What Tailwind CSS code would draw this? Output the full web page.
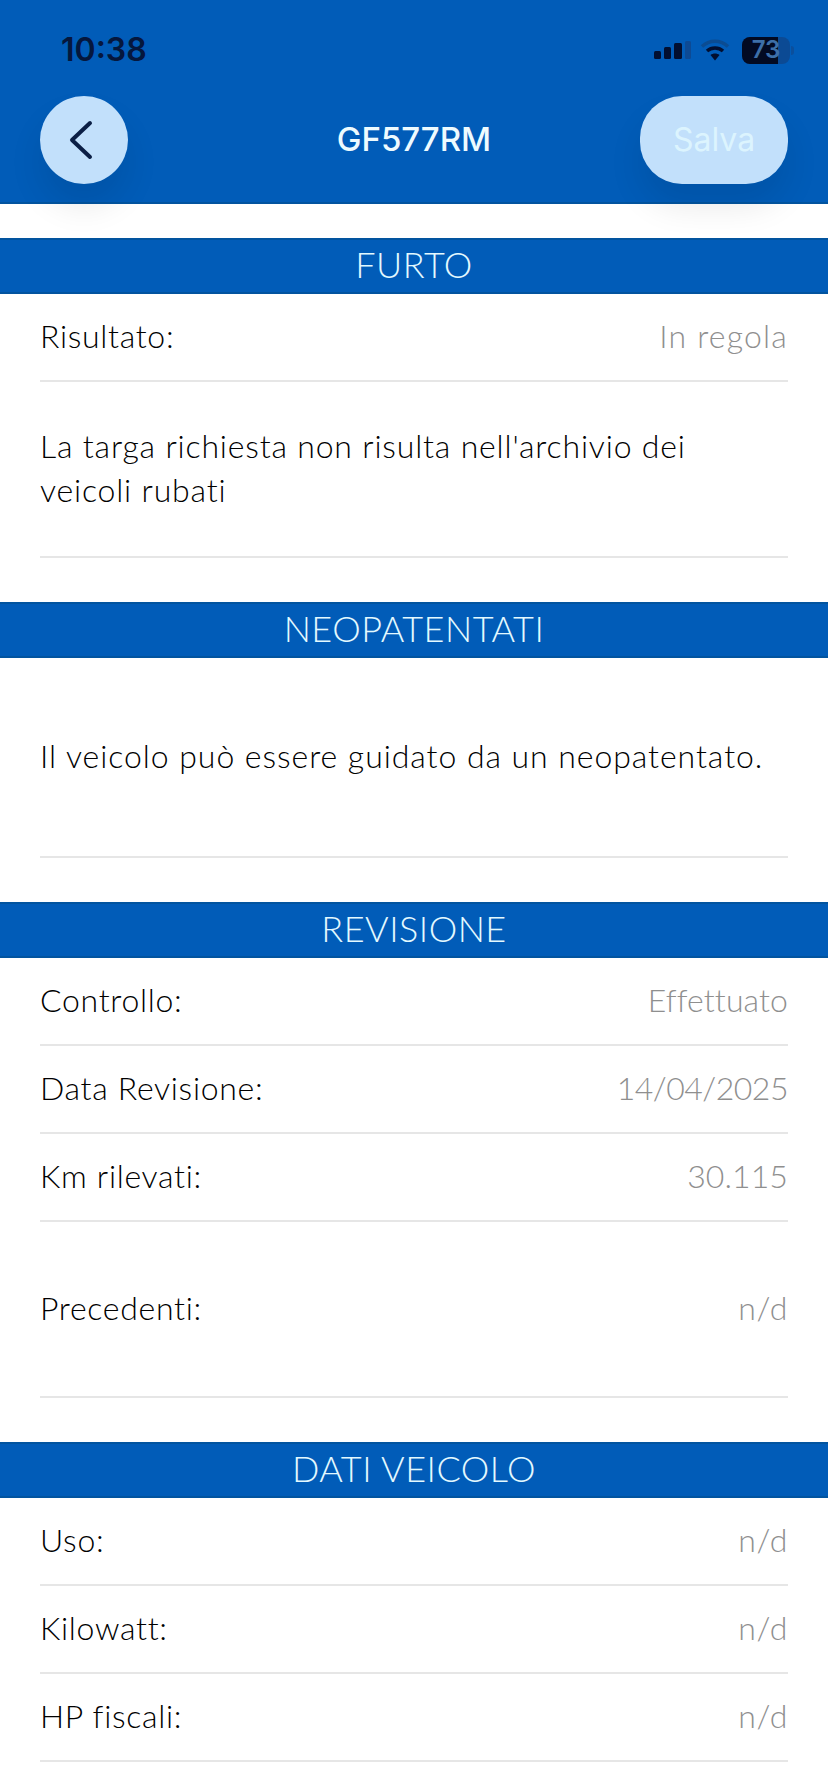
<!DOCTYPE html>
<html lang="it">
<head>
  <meta charset="UTF-8">
  <meta name="viewport" content="width=device-width, initial-scale=1.0">
  <title>GF577RM</title>
  <script src="https://cdn.jsdelivr.net/npm/@tailwindcss/browser@4"></script>
</head>
<body class="bg-white">
  <div class="w-[828px] h-[1792px] overflow-hidden bg-white text-[32px] tracking-[0.7px] font-light text-black font-['Lato',sans-serif]">

    <!-- header -->
    <header class="relative z-10 h-[204px] bg-[#015cb8] border-b-2 border-[#02549f] font-['Inter',sans-serif] tracking-normal font-normal">
      <div class="h-[96px] pl-[61px] pr-[34px] flex items-start justify-between pt-[30px]">
        <span class="text-[32px] leading-[40px] font-semibold text-[#05173d]">10:38</span>
        <div class="flex items-center gap-[12px] h-[40px]">
          <svg width="37" height="18" viewBox="0 0 37 18" class="mr-[-3px]">
            <rect x="0" y="10" width="7" height="8" rx="1.5" fill="#020f30"/>
            <rect x="10" y="6" width="7" height="12" rx="1.5" fill="#020f30"/>
            <rect x="20" y="2" width="8" height="16" rx="1.5" fill="#020f30"/>
            <rect x="31" y="0" width="6" height="18" rx="1.5" fill="#0d4a94"/>
          </svg>
          <svg width="30" height="24" viewBox="0 0 30 24">
            <path d="M2 8.5 C9.5 1.5 20.500 1.500 28 8.500" fill="none" stroke="#0b4c92" stroke-width="3.500"/>
            <path d="M7 13 C11.500 9 18.500 9 23 13" fill="none" stroke="#020f30" stroke-width="3.500"/>
            <path d="M10.500 17 C13 15 17 15 19.500 17 L15 22.500 Z" fill="#020f30"/>
          </svg>
          <div class="flex items-center">
            <div class="relative w-[48px] h-[27px] rounded-[8px] bg-[#0b4a94] overflow-hidden">
              <div class="absolute left-0 top-0 h-full w-[36px] bg-[#020a22]"></div>
              <span class="absolute inset-0 flex items-center justify-center text-[24px] font-semibold text-[#3d6fa8]">73</span>
            </div>
            <div class="ml-[1px] w-[3px] h-[9px] rounded-r-sm bg-[#0b4f9c]"></div>
          </div>
        </div>
      </div>
      <div class="px-[40px] grid grid-cols-[148px_1fr_148px] items-center">
        <button class="w-[88px] h-[88px] rounded-full bg-[#c2e0fb] flex items-center justify-center shadow-[0_22px_34px_rgba(0,0,0,0.09)]">
          <svg width="26" height="40" viewBox="0 0 26 40" class="mr-[6px]">
            <path d="M22 3 L4 20 L22 37" fill="none" stroke="#0b1f45" stroke-width="4" stroke-linecap="round" stroke-linejoin="round"/>
          </svg>
        </button>
        <h1 class="text-[33px] text-center font-medium text-[#eefbff]">GF577RM</h1>
        <button class="w-[148px] h-[88px] rounded-[42px] bg-[#c2e0fb] text-[32px] text-[#dcf4fe] shadow-[0_22px_34px_rgba(0,0,0,0.09)]">Salva</button>
      </div>
    </header>

    <!-- furto -->
    <h2 class="mt-[34px] h-[56px] pb-[4px] bg-[#015cb8] border-y-2 border-[#02549f] flex items-center justify-center text-[36px] tracking-[0.5px] text-[#e3f9ff]">FURTO</h2>
    <div class="px-[40px]">
      <div class="h-[88px] pb-[2px] border-b-2 border-[#e6e6e6] flex items-center justify-between">
        <span>Risultato:</span><span class="text-[#8f8f8f] tracking-[1.2px]">In regola</span>
      </div>
      <div class="h-[176px] border-b-2 border-[#e6e6e6] flex items-center">
        <p class="leading-[44px] pb-[2px] tracking-[0.82px]">La targa richiesta non risulta nell'archivio dei<br>veicoli rubati</p>
      </div>
    </div>

    <!-- neopatentati -->
    <h2 class="mt-[44px] h-[56px] pb-[4px] bg-[#015cb8] border-y-2 border-[#02549f] flex items-center justify-center text-[36px] tracking-[0.5px] text-[#e3f9ff]">NEOPATENTATI</h2>
    <div class="px-[40px]">
      <div class="h-[200px] border-b-2 border-[#e6e6e6] flex items-center">
        <p class="pb-[2px] tracking-[0.95px]">Il veicolo può essere guidato da un neopatentato.</p>
      </div>
    </div>

    <!-- revisione -->
    <h2 class="mt-[44px] h-[56px] pb-[4px] bg-[#015cb8] border-y-2 border-[#02549f] flex items-center justify-center text-[36px] tracking-[0.5px] text-[#e3f9ff]">REVISIONE</h2>
    <div class="px-[40px]">
      <div class="h-[88px] pb-[2px] border-b-2 border-[#e6e6e6] flex items-center justify-between">
        <span>Controllo:</span><span class="text-[#8f8f8f] tracking-[0.1px]">Effettuato</span>
      </div>
      <div class="h-[88px] pb-[2px] border-b-2 border-[#e6e6e6] flex items-center justify-between">
        <span>Data Revisione:</span><span class="text-[#8f8f8f] tracking-[-0.5px]">14/04/2025</span>
      </div>
      <div class="h-[88px] pb-[2px] border-b-2 border-[#e6e6e6] flex items-center justify-between">
        <span>Km rilevati:</span><span class="text-[#8f8f8f] tracking-[0.1px]">30.115</span>
      </div>
      <div class="h-[176px] pb-[2px] border-b-2 border-[#e6e6e6] flex items-center justify-between">
        <span>Precedenti:</span><span class="text-[#8f8f8f]">n/d</span>
      </div>
    </div>

    <!-- dati veicolo -->
    <h2 class="mt-[44px] h-[56px] pb-[4px] bg-[#015cb8] border-y-2 border-[#02549f] flex items-center justify-center text-[36px] tracking-[0.5px] text-[#e3f9ff]">DATI VEICOLO</h2>
    <div class="px-[40px]">
      <div class="h-[88px] pb-[2px] border-b-2 border-[#e6e6e6] flex items-center justify-between">
        <span>Uso:</span><span class="text-[#8f8f8f]">n/d</span>
      </div>
      <div class="h-[88px] pb-[2px] border-b-2 border-[#e6e6e6] flex items-center justify-between">
        <span>Kilowatt:</span><span class="text-[#8f8f8f]">n/d</span>
      </div>
      <div class="h-[88px] pb-[2px] border-b-2 border-[#e6e6e6] flex items-center justify-between">
        <span>HP fiscali:</span><span class="text-[#8f8f8f]">n/d</span>
      </div>
      <div class="h-[88px] flex items-center justify-end">
        <span class="text-[#8f8f8f]">n/d</span>
      </div>
    </div>
  </div>
</body>
</html>
